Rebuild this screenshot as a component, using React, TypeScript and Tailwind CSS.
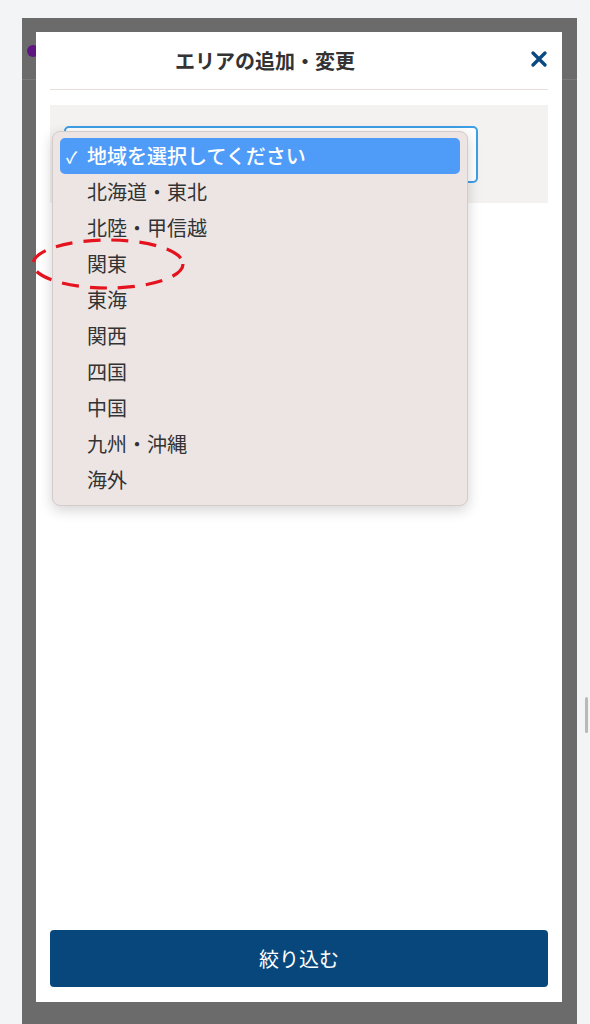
import React from 'react';

const regions = ['北海道・東北', '北陸・甲信越', '関東', '東海', '関西', '四国', '中国', '九州・沖縄', '海外'];

const App: React.FC = () => {
  return (
    <div
      className="relative h-[1024px] w-[590px] overflow-hidden bg-[#f3f4f5] pl-[22px] pt-[18px]"
      style={{ fontFamily: '"Noto Sans CJK JP", "Noto Sans", sans-serif' }}
    >
      {/* dimmed backdrop */}
      <div className="relative h-[1006px] w-[555px] bg-[#6b6b6b] pl-[14px] pt-[14px]">
        <div className="absolute left-[5px] top-[27px] h-[12px] w-[12px] rounded-full bg-[#5e1780]" />
        <div className="absolute left-0 top-[61px] h-px w-[14px] bg-[#7a7a7a]" />
        <div className="absolute right-0 top-[61px] h-px w-[15px] bg-[#7a7a7a]" />

        {/* modal */}
        <div className="relative flex h-[970px] w-[526px] flex-col bg-white px-[14px] pb-[15px]">
          <div className="relative flex h-[58px] shrink-0 items-center justify-center border-b border-[#eadddc]">
            <h2 className="mr-[68px] text-[20px] font-bold text-[#333]">エリアの追加・変更</h2>
            <button className="absolute right-0 top-[18px] text-[#0b4a80]">
              <svg width="18" height="18" viewBox="0 0 18 18">
                <path d="M3 3L15 15M15 3L3 15" stroke="currentColor" strokeWidth="3.4" strokeLinecap="round" />
              </svg>
            </button>
          </div>

          <div className="relative mt-[15px] h-[98px] shrink-0 bg-[#f3f2f1] px-[14px] pt-[21px]">
            <div className="h-[57px] w-[414px] rounded-[5px] border-2 border-[#3d9fe6] bg-white" />

            {/* open dropdown */}
            <div className="absolute left-[2px] top-[26px] z-10 w-[416px] rounded-[8px] border border-[#d3cccb] bg-[#ede5e4] px-[7px] pb-[7px] pt-[6px] shadow-[0_4px_14px_rgba(0,0,0,0.18)]">
              <div className="flex h-[36px] items-center rounded-[5px] bg-[#4f9bf8] pl-[6px] text-[20px] font-medium text-white">
                <span className="w-[21px] text-[16px]">✓</span>
                <span>地域を選択してください</span>
              </div>
              {regions.map((r) => (
                <div key={r} className="flex h-[36px] items-center pl-[27px] text-[20px] text-[#333]">
                  {r}
                </div>
              ))}
            </div>
          </div>

          <div className="flex-1" />

          <button className="h-[57px] w-full shrink-0 rounded-[4px] bg-[#08477c] text-[20px] text-white">
            絞り込む
          </button>
        </div>
      </div>

      {/* annotation */}
      <svg className="absolute left-[30px] top-[237px] z-20" width="156" height="56" viewBox="0 0 156 56">
        <ellipse cx="78" cy="27" rx="75" ry="24" fill="none" stroke="#e5131d" strokeWidth="3.2" strokeDasharray="17 11" />
      </svg>

      <div className="absolute left-[585px] top-[697px] h-[36px] w-[3px] rounded bg-[#b9b9b9]" />
    </div>
  );
};

export default App;
